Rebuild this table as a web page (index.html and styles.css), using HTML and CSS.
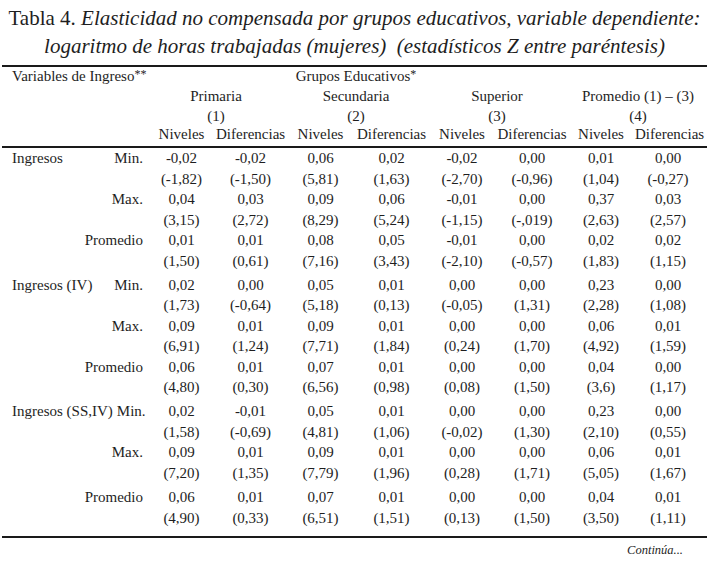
FILE: index.html
```html
<!DOCTYPE html>
<html lang="es">
<head>
<meta charset="utf-8">
<title>Tabla 4</title>
<link rel="stylesheet" href="styles.css">
</head>
<body>
<div class="page">
  <h1 class="title"><span class="lead">Tabla 4.</span> <em>Elasticidad no compensada por grupos educativos, variable dependiente:</em><br><em>logaritmo de horas trabajadas (mujeres)&nbsp; (estadísticos Z entre paréntesis)</em></h1>

  <div class="thead">
    <div class="hrow">
      <div class="varlabel">Variables de Ingreso<sup>**</sup></div>
      <div class="span-groups">Grupos Educativos<sup>*</sup></div>
    </div>
    <div class="hrow">
      <div class="g1">Primaria</div>
      <div class="g2">Secundaria</div>
      <div class="g3">Superior</div>
      <div class="g4">Promedio (1) – (3)</div>
    </div>
    <div class="hrow">
      <div class="g1">(1)</div>
      <div class="g2">(2)</div>
      <div class="g3">(3)</div>
      <div class="g4">(4)</div>
    </div>
    <div class="hrow sub">
      <div class="c1">Niveles</div><div>Diferencias</div>
      <div>Niveles</div><div>Diferencias</div>
      <div>Niveles</div><div>Diferencias</div>
      <div>Niveles</div><div>Diferencias</div>
    </div>
  </div>

  <div class="tbody">
    <div class="row"><div class="lab"><span>Ingresos</span><span>Min.</span></div><div>-0,02</div><div>-0,02</div><div>0,06</div><div>0,02</div><div>-0,02</div><div>0,00</div><div>0,01</div><div>0,00</div></div>
    <div class="row"><div class="lab"></div><div>(-1,82)</div><div>(-1,50)</div><div>(5,81)</div><div>(1,63)</div><div>(-2,70)</div><div>(-0,96)</div><div>(1,04)</div><div>(-0,27)</div></div>
    <div class="row"><div class="lab"><span></span><span>Max.</span></div><div>0,04</div><div>0,03</div><div>0,09</div><div>0,06</div><div>-0,01</div><div>0,00</div><div>0,37</div><div>0,03</div></div>
    <div class="row"><div class="lab"></div><div>(3,15)</div><div>(2,72)</div><div>(8,29)</div><div>(5,24)</div><div>(-1,15)</div><div>(-,019)</div><div>(2,63)</div><div>(2,57)</div></div>
    <div class="row"><div class="lab"><span></span><span>Promedio</span></div><div>0,01</div><div>0,01</div><div>0,08</div><div>0,05</div><div>-0,01</div><div>0,00</div><div>0,02</div><div>0,02</div></div>
    <div class="row"><div class="lab"></div><div>(1,50)</div><div>(0,61)</div><div>(7,16)</div><div>(3,43)</div><div>(-2,10)</div><div>(-0,57)</div><div>(1,83)</div><div>(1,15)</div></div>

    <div class="row group"><div class="lab"><span>Ingresos (IV)</span><span>Min.</span></div><div>0,02</div><div>0,00</div><div>0,05</div><div>0,01</div><div>0,00</div><div>0,00</div><div>0,23</div><div>0,00</div></div>
    <div class="row"><div class="lab"></div><div>(1,73)</div><div>(-0,64)</div><div>(5,18)</div><div>(0,13)</div><div>(-0,05)</div><div>(1,31)</div><div>(2,28)</div><div>(1,08)</div></div>
    <div class="row"><div class="lab"><span></span><span>Max.</span></div><div>0,09</div><div>0,01</div><div>0,09</div><div>0,01</div><div>0,00</div><div>0,00</div><div>0,06</div><div>0,01</div></div>
    <div class="row"><div class="lab"></div><div>(6,91)</div><div>(1,24)</div><div>(7,71)</div><div>(1,84)</div><div>(0,24)</div><div>(1,70)</div><div>(4,92)</div><div>(1,59)</div></div>
    <div class="row"><div class="lab"><span></span><span>Promedio</span></div><div>0,06</div><div>0,01</div><div>0,07</div><div>0,01</div><div>0,00</div><div>0,00</div><div>0,04</div><div>0,00</div></div>
    <div class="row"><div class="lab"></div><div>(4,80)</div><div>(0,30)</div><div>(6,56)</div><div>(0,98)</div><div>(0,08)</div><div>(1,50)</div><div>(3,6)</div><div>(1,17)</div></div>

    <div class="row group"><div class="lab"><span>Ingresos (SS,IV)</span><span>Min.</span></div><div>0,02</div><div>-0,01</div><div>0,05</div><div>0,01</div><div>0,00</div><div>0,00</div><div>0,23</div><div>0,00</div></div>
    <div class="row"><div class="lab"></div><div>(1,58)</div><div>(-0,69)</div><div>(4,81)</div><div>(1,06)</div><div>(-0,02)</div><div>(1,30)</div><div>(2,10)</div><div>(0,55)</div></div>
    <div class="row"><div class="lab"><span></span><span>Max.</span></div><div>0,09</div><div>0,01</div><div>0,09</div><div>0,01</div><div>0,00</div><div>0,00</div><div>0,06</div><div>0,01</div></div>
    <div class="row"><div class="lab"></div><div>(7,20)</div><div>(1,35)</div><div>(7,79)</div><div>(1,96)</div><div>(0,28)</div><div>(1,71)</div><div>(5,05)</div><div>(1,67)</div></div>
    <div class="row extra"><div class="lab"><span></span><span>Promedio</span></div><div>0,06</div><div>0,01</div><div>0,07</div><div>0,01</div><div>0,00</div><div>0,00</div><div>0,04</div><div>0,01</div></div>
    <div class="row"><div class="lab"></div><div>(4,90)</div><div>(0,33)</div><div>(6,51)</div><div>(1,51)</div><div>(0,13)</div><div>(1,50)</div><div>(3,50)</div><div>(1,11)</div></div>
  </div>

  <p class="cont">Continúa...</p>
</div>
</body>
</html>
```

FILE: styles.css
```css
html, body {
  margin: 0;
  padding: 0;
  background: #ffffff;
}

.page {
  width: 705px;
  margin: 0 2px;
  font-family: "Liberation Serif", "Times New Roman", serif;
  color: #1e1e1e;
}

.title {
  margin: 0 0 5px;
  padding-top: 4px;
  font-size: 21px;
  line-height: 28px;
  font-weight: normal;
  text-align: center;
  white-space: nowrap;
}

.title em {
  font-style: italic;
}

.thead,
.tbody {
  font-size: 15px;
}

.thead {
  border-top: 2px solid #1a1a1a;
  border-bottom: 2px solid #1a1a1a;
  padding-bottom: 3px;
}

.hrow,
.row {
  display: grid;
  grid-template-columns: 145px 69px 69px 71px 71px 70px 70px 68px 66px;
  white-space: nowrap;
}

.hrow {
  line-height: 20px;
  text-align: center;
}

.hrow:first-child {
  line-height: 19px;
}

.hrow.sub {
  line-height: 17px;
}

.hrow.sub .c1 {
  grid-column: 2;
}

.varlabel {
  grid-column: 1 / 3;
  text-align: left;
  padding-left: 10px;
}

.span-groups {
  grid-column: 4 / 6;
}

.g1 { grid-column: 2 / 4; }
.g2 { grid-column: 4 / 6; }
.g3 { grid-column: 6 / 8; }
.g4 {
  grid-column: 8 / 10;
  padding-left: 8px;
}

sup {
  font-size: 12px;
  vertical-align: 3px;
  line-height: 0;
}

.tbody {
  border-bottom: 2px solid #1a1a1a;
  padding-bottom: 8px;
}

.row {
  line-height: 20.5px;
  text-align: center;
}

.row.group {
  margin-top: 3.5px;
}

.row.extra {
  margin-top: 4px;
}

.lab {
  display: flex;
  justify-content: space-between;
  gap: 4px;
  padding: 0 4px 0 10px;
}

.cont {
  margin: 2px 0 0;
  padding-right: 24px;
  text-align: right;
  font-style: italic;
  font-size: 12.5px;
  line-height: 20px;
}
```
